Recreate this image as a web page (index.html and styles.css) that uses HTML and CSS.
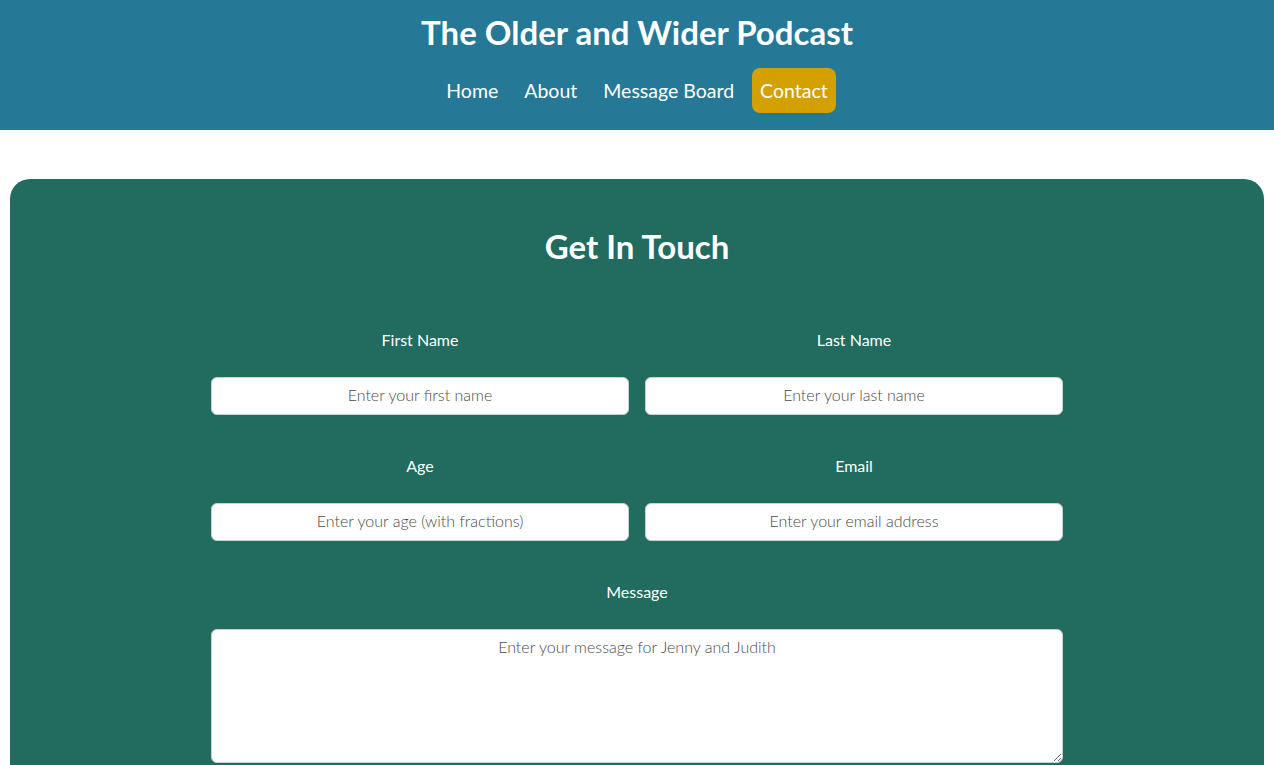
FILE: index.html
```html
<!DOCTYPE html>
<html lang="en">
<head>
<meta charset="utf-8">
<title>Contact - The Older and Wider Podcast</title>
<link rel="stylesheet" href="styles.css">
</head>
<body>
<header class="site-header">
  <h1 class="site-title">The Older and Wider Podcast</h1>
  <nav class="nav">
    <a class="nav-link" href="#">Home</a>
    <a class="nav-link" href="#">About</a>
    <a class="nav-link" href="#">Message Board</a>
    <a class="nav-link active" href="#">Contact</a>
  </nav>
</header>
<main class="card">
  <h2 class="card-title">Get In Touch</h2>
  <form class="form">
    <div class="field">
      <label class="label" for="fn">First Name</label>
      <input class="input" id="fn" type="text" placeholder="Enter your first name">
    </div>
    <div class="field">
      <label class="label" for="ln">Last Name</label>
      <input class="input" id="ln" type="text" placeholder="Enter your last name">
    </div>
    <div class="field">
      <label class="label" for="age">Age</label>
      <input class="input" id="age" type="text" placeholder="Enter your age (with fractions)">
    </div>
    <div class="field">
      <label class="label" for="em">Email</label>
      <input class="input" id="em" type="email" placeholder="Enter your email address">
    </div>
    <div class="field wide">
      <label class="label" for="msg">Message</label>
      <textarea class="input textarea" id="msg" placeholder="Enter your message for Jenny and Judith"></textarea>
    </div>
  </form>
</main>
</body>
</html>
```
FILE: styles.css
```css
* { box-sizing: border-box; }
html, body { margin: 0; padding: 0; background: #ffffff; }
body { font-family: "Lato", "Open Sans", sans-serif; color: #fff; }

.site-header {
  background: #257896;
  height: 130px;
  display: flex;
  flex-direction: column;
  align-items: center;
  padding-top: 11px;
}
.site-title {
  margin: 0;
  font-family: "Lato", sans-serif;
  font-weight: 700;
  font-size: 33px;
  line-height: 42px;
  color: #fff;
}
.nav {
  display: flex;
  gap: 10px;
  margin-top: 15px;
}
.nav-link {
  color: #fff;
  text-decoration: none;
  font-size: 19.5px;
  line-height: 45px;
  height: 45px;
  padding: 0 8px;
  border-radius: 8px;
}
.nav-link.active { background: #d4a000; }

.card {
  background: #216b5f;
  margin: 49px 10px 0;
  border-radius: 20px;
  padding: 47px 0 40px;
  display: flex;
  flex-direction: column;
  align-items: center;
}
.card-title {
  margin: 0;
  font-size: 33px;
  line-height: 40px;
  font-weight: 700;
}
.form {
  width: 852px;
  margin-top: 64px;
  display: grid;
  grid-template-columns: 1fr 1fr;
  column-gap: 16px;
  row-gap: 41px;
}
.field { display: flex; flex-direction: column; align-items: stretch; }
.field.wide { grid-column: 1 / -1; }
.label {
  text-align: center;
  font-size: 16px;
  line-height: 20px;
  margin-bottom: 27px;
}
.input {
  height: 38px;
  border: 1px solid #c8d0d0;
  border-radius: 6px;
  background: #fff;
  font-family: "Lato", sans-serif;
  font-weight: 300;
  font-size: 16px;
  text-align: center;
  color: #333;
  padding: 0 10px 3px;
}
.input::placeholder { color: #4a4a4a; opacity: 1; }
.textarea {
  height: 134px;
  resize: vertical;
  padding: 7px 10px;
  line-height: 20px;
}
```
